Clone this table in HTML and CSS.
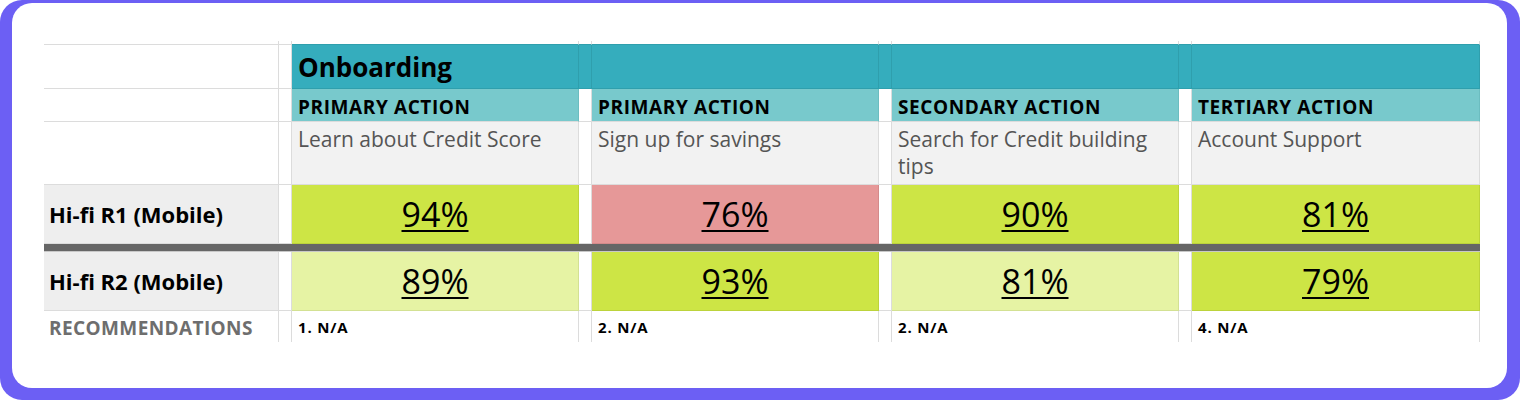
FILE: index.html
```html
<!DOCTYPE html>
<html lang="en">
<head>
<meta charset="utf-8">
<title>Onboarding results</title>
<link rel="stylesheet" href="styles.css">
</head>
<body>
<div class="frame">
  <div class="card">
    <div class="sheet">
      <!-- stub row -->
      <div class="c"></div><div class="c"></div>
      <div class="c st"></div><div class="c st"></div><div class="c st"></div><div class="c st"></div><div class="c st"></div><div class="c st"></div><div class="c st"></div>

      <!-- group header -->
      <div class="c"></div><div class="c"></div>
      <div class="c t1"><span class="group">Onboarding</span></div>
      <div class="c t1"></div><div class="c t1"></div><div class="c t1"></div><div class="c t1"></div><div class="c t1"></div><div class="c t1"></div>

      <!-- action type -->
      <div class="c"></div><div class="c"></div>
      <div class="c t2">PRIMARY ACTION</div><div class="c"></div>
      <div class="c t2">PRIMARY ACTION</div><div class="c"></div>
      <div class="c t2">SECONDARY ACTION</div><div class="c"></div>
      <div class="c t2">TERTIARY ACTION</div>

      <!-- description -->
      <div class="c"></div><div class="c"></div>
      <div class="c desc">Learn about Credit Score</div><div class="c"></div>
      <div class="c desc">Sign up for savings</div><div class="c"></div>
      <div class="c desc">Search for Credit building tips</div><div class="c"></div>
      <div class="c desc">Account Support</div>

      <!-- Hi-fi R1 -->
      <div class="c label">Hi-fi R1 (Mobile)</div><div class="c"></div>
      <div class="c pct lime"><span>94%</span></div><div class="c"></div>
      <div class="c pct pink"><span>76%</span></div><div class="c"></div>
      <div class="c pct lime"><span>90%</span></div><div class="c"></div>
      <div class="c pct lime"><span>81%</span></div>

      <div class="sep"></div>

      <!-- Hi-fi R2 -->
      <div class="c label">Hi-fi R2 (Mobile)</div><div class="c"></div>
      <div class="c pct lime-l"><span>89%</span></div><div class="c"></div>
      <div class="c pct lime"><span>93%</span></div><div class="c"></div>
      <div class="c pct lime-l"><span>81%</span></div><div class="c"></div>
      <div class="c pct lime"><span>79%</span></div>

      <!-- recommendations -->
      <div class="c last rec-label">RECOMMENDATIONS</div><div class="c last"></div>
      <div class="c last rec">1. N/A</div><div class="c last"></div>
      <div class="c last rec">2. N/A</div><div class="c last"></div>
      <div class="c last rec">2. N/A</div><div class="c last"></div>
      <div class="c last rec">4. N/A</div>
    </div>
  </div>
</div>
</body>
</html>
```

FILE: styles.css
```css
* { box-sizing: border-box; margin: 0; padding: 0; }
html, body { background: #ffffff; }
body {
  width: 1520px;
  height: 400px;
  font-family: "Open Sans", "Liberation Sans", sans-serif;
  color: #000;
  overflow: hidden;
}
.frame {
  width: 1520px;
  height: 400px;
  background: #6c5ff4;
  border-radius: 22px;
  padding: 3px 13px 12px 12px;
}
.card {
  background: #ffffff;
  border-radius: 20px;
  height: 100%;
  padding: 38px 0 0 32px;
}
.sheet {
  display: grid;
  grid-template-columns: 235px 13px 287px 13px 287px 13px 287px 13px 288px;
  grid-template-rows: 4px 44px 33px 63px 59px 8px 59px 31px;
}
.c {
  border-right: 1px solid #dcdcdc;
  border-bottom: 1px solid #dcdcdc;
  display: flex;
  align-items: center;
  min-width: 0;
}
.c.last { border-bottom: none; }
.st { border-bottom-color: #2f9fad; }

.t1 {
  background: #35adbd;
  border-color: #2f9fad;
}
.group {
  padding-left: 6px;
  font-size: 26px;
  font-weight: 700;
}
.t2 {
  background: #78c9cc;
  border-right-color: #6cbdc0;
  padding: 3px 0 0 6px;
  font-size: 19px;
  font-weight: 700;
  letter-spacing: 0.6px;
}
.desc {
  background: #f2f2f2;
  align-items: flex-start;
  padding: 4px 8px 0 6px;
  font-size: 21px;
  line-height: 27px;
  color: #555555;
}
.label {
  background: #eeeeee;
  padding-left: 5px;
  font-size: 22px;
  font-weight: 700;
}
.pct {
  justify-content: center;
  font-size: 34px;
}
.pct span {
  text-decoration: underline;
  text-decoration-thickness: 1.5px;
  text-underline-offset: 3px;
}
.lime { background: #cde545; border-color: #bcd33b; }
.lime-l { background: #e6f3a4; border-color: #d3e193; }
.pink { background: #e69898; border-color: #d48a8a; }

.sep {
  grid-column: 1 / -1;
  background: #666666;
  border-bottom: 1px solid #c8c8c8;
}
.rec-label {
  padding: 2px 0 0 5px;
  font-size: 19px;
  font-weight: 700;
  letter-spacing: 0.4px;
  color: #6e6e6e;
}
.rec {
  padding-left: 6px;
  font-size: 15px;
  font-weight: 700;
  letter-spacing: 0.8px;
}
```
